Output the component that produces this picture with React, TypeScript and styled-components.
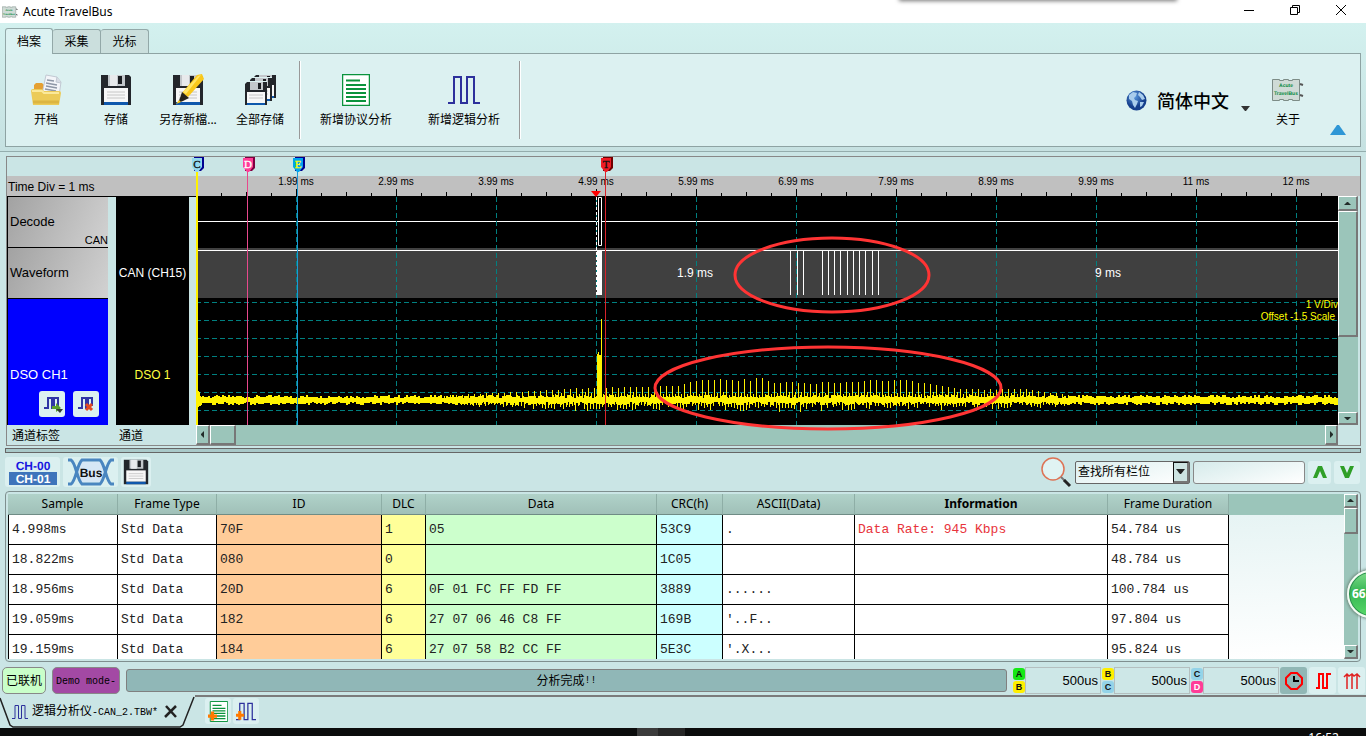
import React from 'react';
import styled, { createGlobalStyle } from 'styled-components';

const ui = `"Noto Sans", "Noto Sans CJK SC", sans-serif`;
const sans = `"Liberation Sans", "Noto Sans CJK SC", sans-serif`;
const mono = `"Liberation Mono", "Noto Sans CJK SC", monospace`;

const GlobalStyle = createGlobalStyle`
  * { box-sizing: border-box; }
  html, body { margin: 0; padding: 0; overflow: hidden; }
  button, input, select { margin: 0; font: inherit; color: inherit; }
  svg { display: block; }
`;

const Window = styled.div`
  position: relative;
  display: flex;
  flex-direction: column;
  height: 100vh;
  min-height: 640px;
  overflow: hidden;
  background: #cae5e5;
  color: #000;
  font: 12px/16px ${ui};
`;

/* Title bar */
const TitleBar = styled.header`
  display: flex;
  align-items: center;
  flex: none;
  height: 23px;
  padding: 0 2px;
  background: #fff;
`;
const Title = styled.h1`
  flex: 1;
  margin: 0 0 0 5px;
  font: 12px/16px ${ui};
`;
const WindowButton = styled.button`
  display: flex;
  align-items: center;
  justify-content: center;
  align-self: flex-start;
  width: 46px;
  height: 20px;
  padding: 0;
  border: 0;
  background: none;
`;
const TopShade = styled.div`
  position: absolute;
  top: -6px;
  left: 900px;
  width: 276px;
  height: 6px;
  box-shadow: 0 0 4px 1px #777;
`;

/* Ribbon */
const Ribbon = styled.section`
  flex: none;
  height: 129px;
  padding: 4px 5px 0;
  border-bottom: 1px solid #94adad;
  background: linear-gradient(#d3f1ef, #c6e1e1);
`;
const TabList = styled.div`
  display: flex;
  align-items: flex-end;
  height: 26px;
`;
const RibbonTab = styled.button<{ $active?: boolean }>`
  position: relative;
  z-index: ${p => (p.$active ? 1 : 0)};
  width: 48px;
  height: ${p => (p.$active ? 26 : 24)}px;
  margin-bottom: ${p => (p.$active ? -1 : 0)}px;
  padding: 0;
  border: 1px solid #93a8a8;
  border-left-width: ${p => (p.$active ? 1 : 0)}px;
  border-bottom: 0;
  border-radius: 3px 3px 0 0;
  background: ${p => (p.$active ? '#dcf2f2' : '#cbdfdd')};
`;
const RibbonPanel = styled.div`
  display: flex;
  height: 94px;
  padding: 7px 6px;
  border: 1px solid #8ea3a3;
  background: #dcf1f1;
`;
const RibbonGroup = styled.div`
  display: flex;
  padding-right: 3px;
  border-right: 1px solid #999;
  box-shadow: 1px 0 #fff;
`;
const RibbonButton = styled.button<{ $width: number }>`
  display: flex;
  flex-direction: column;
  align-items: center;
  gap: 6px;
  width: ${p => p.$width}px;
  padding: 13px 0 0;
  border: 0;
  background: none;
  white-space: nowrap;
`;
const RibbonRight = styled.div`
  display: flex;
  margin-left: auto;
`;
const LanguageButton = styled.button`
  display: flex;
  align-items: center;
  gap: 10px;
  padding: 0;
  border: 0;
  background: none;
  font: 500 18px/26px "Noto Sans CJK SC", sans-serif;
`;
const LanguageArrow = styled.svg`
  margin: 16px 0 0 2px;
`;
const AboutWrap = styled.div`
  margin: 0 6px 0 2px;
`;
const CollapseButton = styled.button`
  align-self: flex-end;
  margin: 0 8px 4px 0;
  padding: 0;
  border: 0;
  background: none;
`;

/* Scope */
const Scope = styled.section`
  flex: none;
  margin: 4px 5px 0 6px;
  border: 1px solid #888;
`;
const ScopeBody = styled.div`
  display: flex;
  height: 268px;
`;
const SideColumn = styled.div<{ $width: number }>`
  display: flex;
  flex-direction: column;
  flex: none;
  width: ${p => p.$width}px;
`;
const RulerCell = styled.div`
  flex: none;
  height: 20px;
  margin-top: 19px;
  padding-left: 1px;
  background: #c0c0c0;
  font: 12px/22px ${sans};
`;
const ChannelArea = styled.div`
  display: flex;
  flex: 1;
  gap: 8px;
  padding-right: 7px;
  border-top: 1px solid #000;
  border-left: 1px solid #000;
`;
const LabelColumn = styled.div`
  display: flex;
  flex-direction: column;
  width: 100px;
`;
const ChannelLabel = styled.div`
  position: relative;
  display: flex;
  align-items: center;
  height: 51px;
  padding-left: 2px;
  border-bottom: 1px solid #000;
  background: linear-gradient(115deg, #a2a2a2, #d2d2d2);
  font: 13px/16px ${sans};
`;
const ProtocolName = styled.small`
  position: absolute;
  right: 0;
  bottom: 0;
  font: 11px/14px ${sans};
`;
const DsoLabel = styled.div`
  display: flex;
  flex: 1;
  flex-direction: column;
  justify-content: flex-end;
  gap: 8px;
  padding: 0 9px 8px 2px;
  background: #0000ff;
  color: #fff;
  font: 13px/16px ${sans};
`;
const DsoTools = styled.div`
  display: flex;
  justify-content: flex-end;
  gap: 8px;
`;
const DsoButton = styled.button`
  width: 26px;
  height: 26px;
  padding: 0;
  border: 0;
  border-radius: 3px;
  background: #dcf1f1;
`;
const SourceColumn = styled.div`
  display: flex;
  flex-direction: column;
  flex: 1;
  background: #000;
  color: #fff;
  font: 12px/16px ${sans};
  white-space: nowrap;
`;
const SourceName = styled.div<{ $dso?: boolean }>`
  display: flex;
  align-items: center;
  justify-content: center;
  height: ${p => (p.$dso ? 52 : 152)}px;
  color: ${p => (p.$dso ? '#ffff40' : '#fff')};
`;
const Chart = styled.svg`
  position: relative;
  z-index: 1;
  flex: 1;
  min-width: 0;
  height: 268px;
  overflow: visible;
  pointer-events: none;
`;
const ScopeFooter = styled.div`
  display: flex;
  height: 20px;
  padding-right: 22px;
  line-height: 22px;
`;
const FooterLabel = styled.div<{ $width: number }>`
  flex: none;
  width: ${p => p.$width}px;
  padding-left: 5px;
`;

/* Scroll bars */
const Track = styled.div<{ $vertical?: boolean; $inset?: boolean }>`
  display: flex;
  flex: 1;
  flex-direction: ${p => (p.$vertical ? 'column' : 'row')};
  margin-right: ${p => (p.$inset ? 2 : 0)}px;
  background: #9bc5ba;
`;
const ScrollPart = styled.button<{ $size: number }>`
  display: flex;
  align-items: center;
  justify-content: center;
  flex: 0 0 ${p => p.$size}px;
  padding: 0;
  border: 1px solid #fff;
  border-right: 2px solid #777;
  border-bottom: 2px solid #777;
  background: #9bc5ba;
`;
const ScrollGap = styled.div`
  flex: 1;
`;

const Splitter = styled.div`
  flex: none;
  height: 5px;
  margin: 2px 5px 0;
  border: 1px solid #666;
  background: #a9c9c9;
`;

/* Toolbar */
const Toolbar = styled.div`
  display: flex;
  align-items: center;
  flex: none;
  height: 38px;
  padding: 0 6px 0 5px;
`;
const ToolButton = styled.button<{ $width: number; $height?: number; $active?: boolean }>`
  display: flex;
  align-items: center;
  justify-content: center;
  flex: none;
  width: ${p => p.$width}px;
  height: ${p => p.$height ?? 30}px;
  padding: 0;
  border: 0;
  border-radius: 3px;
  background: ${p => (p.$active ? '#91b7b5' : '#dbf0f0')};
`;
const ToolGroup = styled.div`
  display: flex;
  gap: 3px;
`;
const SearchGroup = styled.form`
  display: flex;
  align-items: center;
  gap: 3px;
  margin-left: auto;
`;
const SelectWrap = styled.label`
  position: relative;
  display: block;
`;
const ColumnSelect = styled.select`
  appearance: none;
  display: block;
  width: 115px;
  height: 23px;
  padding: 0 20px 0 2px;
  border: 1px solid #666;
  border-radius: 2px;
  background: linear-gradient(165deg, #dcefef, #fff);
`;
const SelectArrow = styled.span`
  position: absolute;
  top: 1px;
  right: 1px;
  display: flex;
  align-items: center;
  justify-content: center;
  width: 16px;
  height: 21px;
  border: 1px solid #111;
  border-right: 2px solid #777;
  border-bottom: 2px solid #777;
  background: #cde4e2;
  pointer-events: none;
`;
const SearchInput = styled.input`
  width: 112px;
  height: 23px;
  padding: 0 4px;
  border: 1px solid #888;
  border-radius: 3px;
  background: linear-gradient(165deg, #d6ebeb, #fff);
`;

/* Data table */
const TablePanel = styled.section`
  display: flex;
  flex: 1;
  min-height: 0;
  margin: 0 5px;
  padding: 2px;
  border: 1px solid #7f8f8f;
  border-radius: 4px;
`;
const TableArea = styled.div`
  flex: 1;
  min-width: 0;
  overflow: hidden;
  background: linear-gradient(#9bc5ba, #9bc5ba) 0 0 / 100% 21px no-repeat, linear-gradient(178deg, #dcefef, #fff);
`;
const DataTable = styled.table`
  width: 1221px;
  table-layout: fixed;
  border-spacing: 0;
`;
const HeadCell = styled.th<{ $width: number; $bold?: boolean }>`
  width: ${p => p.$width}px;
  height: 21px;
  padding: 0;
  border-right: 1px solid #8eaea6;
  border-bottom: 1px solid #6f8c85;
  background: linear-gradient(#b0d2c9, #a0c0b8);
  font: ${p => (p.$bold ? 700 : 400)} 12px/20px ${ui};
`;
const Cell = styled.td<{ $tint?: string; $ink?: string }>`
  height: 30px;
  padding: 0 3px;
  border-right: 1px solid #000;
  border-bottom: 1px solid #000;
  background: ${p => p.$tint ?? '#fff'};
  color: ${p => p.$ink ?? '#222'};
  font: 13px/16px ${mono};
  white-space: pre;
  &:first-child { border-left: 1px solid #000; }
`;
const TableScroll = styled.div`
  display: flex;
  flex: none;
  width: 14px;
`;

/* Status bar */
const StatusBar = styled.footer`
  display: flex;
  align-items: center;
  flex: none;
  height: 33px;
  padding: 4px 1px 0 2px;
`;
const StatusButton = styled.button<{ $width: number; $tone: string }>`
  flex: none;
  width: ${p => p.$width}px;
  height: 27px;
  margin-right: 6px;
  padding: 0;
  border: 1px solid #888;
  border-radius: 5px;
  background: ${p => p.$tone};
  white-space: nowrap;
`;
const Progress = styled.div`
  display: flex;
  align-items: center;
  justify-content: center;
  flex: 1;
  height: 23px;
  margin-right: 6px;
  border: 1px solid #808080;
  border-radius: 3px;
  background: #90b7b7;
`;
const Latin = styled.span`
  font: 10px/16px ${mono};
`;
const Delta = styled.label`
  display: flex;
  flex: none;
  width: 89px;
`;
const BadgePair = styled.span`
  display: flex;
  flex-direction: column;
  gap: 1px;
  width: 12px;
  padding-top: 1px;
`;
const Badge = styled.span<{ $tone: string; $ink?: string }>`
  height: 12px;
  border-radius: 3px;
  background: ${p => p.$tone};
  color: ${p => p.$ink ?? '#111'};
  font: 700 9px/12px ${sans};
  text-align: center;
`;
const DeltaInput = styled.input`
  width: 76px;
  height: 27px;
  padding: 0 2px;
  border: 1px solid #b4bfbf;
  background: #cde7e7;
  font: 13px/16px ${sans};
  text-align: right;
`;
const StatusTools = styled.div`
  display: flex;
  gap: 2px;
`;

/* Document tabs */
const DocumentBar = styled.nav`
  display: flex;
  flex: none;
  height: 33px;
`;
const DocumentTab = styled.div`
  position: relative;
  display: flex;
  align-items: center;
  gap: 4px;
  width: 195px;
  padding: 0 18px 0 12px;
  white-space: nowrap;
`;
const TabOutline = styled.svg`
  position: absolute;
  inset: 0;
`;
const CloseButton = styled.button`
  margin-left: auto;
  padding: 0;
  border: 0;
  background: none;
`;
const DocumentTools = styled.div`
  display: flex;
  flex: 1;
  gap: 2px;
  padding: 1px 10px;
  border-top: 2px solid #7b7b7b;
`;
const DesktopStrip = styled.div`
  display: flex;
  justify-content: space-between;
  flex: none;
  height: 8px;
  padding: 0 27px 0 637px;
  overflow: hidden;
  background: #0b0c0c;
  color: #fff;
  font: 12px/16px ${ui};
`;
const StripItem = styled.span`
  width: 48px;
  background: linear-gradient(90deg, #3b3b3b 44%, #262626 44%);
`;
const Clock = styled.time`
  padding-top: 2px;
`;
const FloatBall = styled.div`
  position: absolute;
  right: -29px;
  top: 570px;
  width: 48px;
  height: 48px;
  padding-left: 3px;
  border: 2px solid #f4fbf4;
  border-radius: 50%;
  background: linear-gradient(#7fdc8a, #35b653 45%, #58d868);
  box-shadow: 0 0 3px 1px #6d8579, inset 0 0 0 1px #2b8c50;
  color: #fff;
  font: 700 12px/44px ${ui};
`;

/* Icons */
const ChipLogo = ({ w, h }: { w: number; h: number }) => (
  <svg width={w} height={h} viewBox="0 0 32 22">
    <path d="M.5.5h7v1h4v-1h5v1h4v-1h7v21h-7v-1h-4v1h-5v-1h-4v1h-7z" fill="#cfdbd6" stroke="#7d8c87" />
    <path d="M28 5l3 1M28 16l3 1" stroke="#555" strokeWidth="2" />
    <g textAnchor="middle" textRendering="geometricPrecision" fontFamily="Liberation Sans" fontWeight="700" fontSize="5" fill="#078a3d">
      <text x="14" y="8">Acute</text>
      <text x="14" y="16">TravelBus</text>
    </g>
  </svg>
);

const FloppyShape = () => (
  <>
    <path d="M1 1h28l2 2v28H1z" fill="#23262b" />
    <path d="M8 1h17v11H8z" fill="#c3c7cb" />
    <path d="M10 1h7v11h-7z" fill="#e8eaec" />
    <path d="M18 2h4v8h-4z" fill="#1c1e22" />
    <path d="M4 14h24v14H4z" fill="#f7f7f7" />
    <path d="M7 18h18M7 21h18M7 24h18" stroke="#c6c6c6" />
    <path d="M4 28h24v3H4z" fill="#0f58ad" />
  </>
);
const Floppy = ({ size = 32 }: { size?: number }) => (
  <svg width={size} height={size} viewBox="0 0 32 32"><FloppyShape /></svg>
);
const FloppyPen = () => (
  <svg width="32" height="32" viewBox="0 0 32 32">
    <FloppyShape />
    <path d="M25 1l5-1 2 5-16 18-6-4z" fill="#f9c81c" />
    <path d="M26 2l3-1L14 20l-3-2z" fill="#ffe566" />
    <path d="M10 18l7 6-6 3-5 2 2-5z" fill="#26231c" />
    <path d="M7 26l-3 4 5-2z" fill="#f9c81c" />
  </svg>
);
const FloppyStack = () => (
  <svg width="32" height="32" viewBox="0 0 32 32">
    {[[9, 0], [5, 3], [0, 7]].map(([x, y]) => (
      <g key={x} transform={`translate(${x} ${y})`}>
        <path d="M0 2l2-2h21v25H0z" fill="#dcf1f1" />
        <path d="M1 3l2-2h20v23H1z" fill="#23262b" />
        <path d="M6 1h13v8H6z" fill="#c3c7cb" />
        <path d="M14 2h3v6h-3z" fill="#1c1e22" />
        <path d="M3 11h18v11H3z" fill="#f7f7f7" />
        <path d="M5 14h14M5 17h14" stroke="#c6c6c6" />
        <path d="M3 22h18v2H3z" fill="#0f58ad" />
      </g>
    ))}
  </svg>
);
const Folder = () => (
  <svg width="32" height="32" viewBox="0 0 32 32">
    <path d="M4 11l2-2h6l3 3v8H4z" fill="#e5a032" />
    <path d="M16 1l11 2 4 5-3 21-17-4z" fill="#f3f5f9" stroke="#c2c9d3" />
    <path d="M27 3l-1 5 5 1" fill="#d7dce5" stroke="#c2c9d3" />
    <path d="M17 6l7 1M16 9l11 2M16 12l11 2M15 15l11 2" stroke="#8e97a6" strokeWidth="1.5" />
    <path d="M1 17q0-2 2-2h9l2 2h15q2 0 2 2l-2 12H3z" fill="#eccb58" />
    <path d="M2 17h10l2 2h15" fill="none" stroke="#fbe99a" strokeWidth="2" />
    <path d="M3 28h26" stroke="#d2a832" strokeWidth="3" opacity=".6" />
  </svg>
);
const DocIcon = ({ w = 28, h = 32, plus }: { w?: number; h?: number; plus?: boolean }) => (
  <svg width={w} height={h} viewBox={plus ? '-3 0 31 32' : '0 0 28 32'}>
    <path d="M.5.5h27v31H.5z" fill="#fff" stroke="#0a933d" strokeWidth="1.5" />
    <path d="M4 6.500h14M4 11h20M4 15h20M4 19h20M4 23h20M4 27h20" stroke="#0a933d" strokeWidth="2" />
    {plus && <path d="M4 16v14M-3 23h14" stroke="#ff7a00" strokeWidth="5" />}
  </svg>
);
const PulseIcon = ({ w = 32, h = 28, plus }: { w?: number; h?: number; plus?: boolean }) => (
  <svg width={w} height={h} viewBox="0 0 32 28">
    <path d="M0 27h6V1h7v26h6V1h7v26h6" fill="none" stroke="#2d309c" strokeWidth="2" />
    {plus && <path d="M6 13v14M-1 20h14" stroke="#ff7a00" strokeWidth="5" />}
  </svg>
);
const Globe = () => (
  <svg width="21" height="21" viewBox="0 0 21 21">
    <defs>
      <radialGradient id="sea" cx=".4" cy=".3">
        <stop offset="0" stopColor="#5c9be0" />
        <stop offset="1" stopColor="#153f8c" />
      </radialGradient>
    </defs>
    <circle cx="10.5" cy="10.5" r="10" fill="url(#sea)" />
    <path d="M3 5l4-3 4 1-1 3-2 2 1 2 3 1-1 3-2 4-2-3-1-4-3-2zM13 2l4 3 2 4-3 1-2-3-2-2zM14 12l4 0-2 4-2 1z" fill="#a9cdec" />
  </svg>
);
const Arrow = ({ dir }: { dir: 'up' | 'down' | 'left' | 'right' }) => {
  const d = { up: 'M0 5h7L4 2H3z', down: 'M0 2h7L4 5H3z', left: 'M5 0v7L2 4V3z', right: 'M2 0v7l3-3V3z' }[dir];
  return <svg width="7" height="7" viewBox="0 0 7 7"><path d={d} fill="#222c29" /></svg>;
};
const DsoIcon = ({ remove }: { remove?: boolean }) => (
  <svg width="26" height="26" viewBox="0 0 26 26">
    <path d="M5 17h4V7h4v10h2V7h4v8" fill="none" stroke="#3036a6" strokeWidth="2" />
    {remove
      ? <path d="M13 13l6 6M19 13l-6 6" stroke="#e24a22" strokeWidth="3" />
      : <><path d="M13 15h4v-3l5 5-5 4v-3h-4z" fill="#58a12c" /><path d="M17 18h7l-3 4z" fill="#333c33" /></>}
  </svg>
);
const ChannelIcon = () => (
  <svg width="48" height="26" viewBox="0 0 48 26">
    <rect y="13" width="48" height="13" fill="#3e74bb" />
    <g textAnchor="middle" textRendering="geometricPrecision" fontFamily="Liberation Sans" fontWeight="700" fontSize="12">
      <text x="24" y="11" fill="#1717e0">CH-00</text>
      <text x="24" y="24" fill="#fff">CH-01</text>
    </g>
  </svg>
);
const BusIcon = () => (
  <svg width="48" height="28" viewBox="0 0 48 28">
    <path d="M13 4h22l5 10-5 10H13L8 14z" fill="#d6e7f5" />
    <path d="M1 2h3c5 3 6 20 11 24h18c5-4 6-21 11-24h3M1 26h3C9 23 10 6 15 2h18c5 4 6 21 11 24h3" fill="none" stroke="#4a86c0" strokeWidth="3" />
    <text x="24" y="19" textAnchor="middle" textRendering="geometricPrecision" fontFamily="Liberation Sans" fontWeight="700" fontSize="12" fill="#111">Bus</text>
  </svg>
);
const Magnifier = () => (
  <svg width="32" height="32" viewBox="0 0 32 32">
    <circle cx="13" cy="13" r="11" fill="#e0f3f3" stroke="#dd7355" strokeWidth="1.5" />
    <path d="M21 21l4 4" stroke="#777" strokeWidth="2" />
    <path d="M24 24l6 6" stroke="#222" strokeWidth="3" />
  </svg>
);
const Chevron = ({ down }: { down?: boolean }) => (
  <svg width="14" height="12" viewBox="0 0 14 12">
    <path d={down ? 'M0 0h4l3 7 3-7h4L9 12H5z' : 'M0 12h4l3-7 3 7h4L9 0H5z'} fill="#2f9f27" />
  </svg>
);

/* Chart geometry: x runs from the left edge of the plot, one division is 100 units */
const PLOT_SPAN = 2600;
const tickLabels = ['1.99 ms', '2.99 ms', '3.99 ms', '4.99 ms', '5.99 ms', '6.99 ms', '7.99 ms', '8.99 ms', '9.99 ms', '11 ms', '12 ms'];
const gridRows = [145, 163, 181, 199, 217, 235, 253];
const edges = [594, 601, 607, 626, 632, 638, 644, 651, 657, 663, 669, 676, 682];

const noise = (n: number) => {
  const v = Math.sin(n * 12.9898) * 43758.5453;
  return v - Math.floor(v);
};
const envelope: [number, number][] = [
  [0, 0], [240, 0], [300, 3], [390, 8], [480, 10], [500, 15], [515, 17], [565, 17],
  [580, 14], [620, 13], [690, 16], [710, 16], [745, 10], [770, 7], [830, 7], [880, 0], [PLOT_SPAN, 0],
];
const spikeHeight = (x: number) => {
  const i = envelope.findIndex(([px]) => px > x);
  if (i < 1) return 0;
  const [x0, y0] = envelope[i - 1];
  const [x1, y1] = envelope[i];
  return y0 + ((y1 - y0) * (x - x0)) / (x1 - x0);
};
const ripple = Array.from({ length: PLOT_SPAN }, (_, x) => {
  const h = spikeHeight(x);
  const edge = x < 6 ? 6 - x : 0;
  let top = 241 - Math.round(noise(x >> 1) * 3) - edge;
  let bottom = 245 + Math.round(noise((x >> 1) + 900) * 3) + edge;
  if (h > 0 && x % 6 === 2) top = 239 - Math.round(h * (0.9 + noise(x) * 0.15));
  if (h > 0 && x % 3 === 1) bottom += Math.round(noise(x + 50) * Math.min(h, 7));
  if (h > 6 && x % 6 === 5) top -= 3;
  return `M${x + 0.5} ${top}V${bottom}`;
}).join('');
const ticks = Array.from({ length: PLOT_SPAN / 25 }, (_, i) => {
  const size = (i + 1) % 4 === 0 ? 7 : (i + 1) % 2 === 0 ? 4 : 3;
  return `M${(i + 1) * 25 + 0.5} ${39 - size}v${size}`;
}).join('');
const gridLines = Array.from({ length: PLOT_SPAN / 100 }, (_, i) => `M${(i + 1) * 100 + 0.5} 40V268`).join('');

const Marker = ({ x, name, fill, shade, ink, line, width = 1 }: {
  x: number; name: string; fill: string; shade: string; ink: string; line: string; width?: number;
}) => (
  <g>
    <path d={`M${x + width / 2} 14V268`} stroke={line} strokeWidth={width} />
    <path d={`M${x - 2} 0h10v11l-3 3h-7z`} fill={shade} />
    <path d={`M${x - 4} 1h10v9l-4 5h-2l-4-5z`} fill={fill} />
    <text x={x + 1} y="11" textAnchor="middle" fontFamily="Liberation Serif" fontSize="11" fill={ink} stroke={ink} strokeWidth=".3">{name}</text>
  </g>
);

const ScopeChart = () => (
  <Chart role="img" aria-label="CAN">
    <svg width="100%" height="268">
      <rect y="19" width="100%" height="20" fill="#c0c0c0" />
      <path d={ticks} stroke="#000" />
      <g fontFamily="Liberation Sans" fontSize="10">
        {tickLabels.map((t, i) => <text key={t} x={(i + 1) * 100} y="28" textAnchor="middle">{t}</text>)}
      </g>
      <rect y="39" width="100%" height="229" fill="#000" />
      <rect y="91" width="100%" height="50" fill="#404040" />
      <path d={`M0 64.5H${PLOT_SPAN}M0 93.5H${PLOT_SPAN}`} stroke="#fff" />
      <path d={gridRows.map(y => `M0 ${y + 0.5}H${PLOT_SPAN}`).join('') + gridLines} stroke="#008080" strokeDasharray="5 3" />
      <path d={edges.map(x => `M${x + 0.5} 93V138`).join('')} stroke="#fff" />
      <path d="M401 94h5v44h-5z" fill="#fff" />
      <path d="M402.5 40.5h3v48h-3z" fill="#000" stroke="#fff" />
      <path d="M400.5 40V138" stroke="#fff" strokeDasharray="3 2" />
      <g fontFamily="Liberation Sans" fontSize="12" fill="#fff">
        <text x="481" y="120">1.9 ms</text>
        <text x="899" y="120">9 ms</text>
      </g>
      <path d={ripple} stroke="#fff200" />
      <path d="M401 197h1v-2h1v3h2v42h-4zM405 162h1v80h-1z" fill="#fff200" />
      <g fontFamily="Liberation Sans" fontSize="10" fill="#ffff00" textAnchor="end">
        <text x="100%" y="151">1 V/Div</text>
        <text x="100%" dx="-3" y="163">Offset -1.5 Scale</text>
      </g>
      <path d="M395 34h10l-5 6z" fill="#f00" />
    </svg>
    <Marker x={0} name="C" fill="#94d8ee" shade="#000090" ink="#111" line="#fff200" width={2} />
    <Marker x={51} name="D" fill="#ff3d97" shade="#7d0040" ink="#fff" line="#e8488c" />
    <Marker x={101} name="E" fill="#00a5ee" shade="#000090" ink="#ffff00" line="#1d9ad6" />
    <Marker x={409} name="T" fill="#ee1c25" shade="#700000" ink="#111" line="#d8232a" />
    <g fill="none" stroke="#ff3434" strokeWidth="3">
      <ellipse cx="636" cy="118" rx="97" ry="37" />
      <ellipse cx="632" cy="231" rx="173" ry="41" />
    </g>
  </Chart>
);

/* Table data */
const columns: [string, number][] = [
  ['Sample', 110], ['Frame Type', 99], ['ID', 165], ['DLC', 44], ['Data', 231],
  ['CRC(h)', 66], ['ASCII(Data)', 132], ['Information', 253], ['Frame Duration', 121],
];
const tints: Record<number, string> = { 2: '#ffcc99', 3: '#ffff99', 4: '#ccffcc', 5: '#ccffff' };
const rows = [
  ['4.998ms', 'Std Data', '70F', '1', '05', '53C9', '.', 'Data Rate: 945 Kbps', '54.784 us'],
  ['18.822ms', 'Std Data', '080', '0', '', '1C05', '', '', '48.784 us'],
  ['18.956ms', 'Std Data', '20D', '6', '0F 01 FC FF FD FF', '3889', '......', '', '100.784 us'],
  ['19.059ms', 'Std Data', '182', '6', '27 07 06 46 C8 FF', '169B', "'..F..", '', '97.804 us'],
  ['19.159ms', 'Std Data', '184', '6', '27 07 58 B2 CC FF', '5E3C', "'.X...", '', '95.824 us'],
];

const tones: Record<string, string> = { A: '#16e816', B: '#ffef00', C: '#94d3e8', D: '#ff3d97' };
const deltas = [['A', 'B'], ['B', 'C'], ['C', 'D']];

export default function App() {
  return (
    <Window>
      <GlobalStyle />
      <TitleBar>
        <ChipLogo w={16} h={12} />
        <Title>Acute TravelBus</Title>
        <WindowButton aria-label="Minimize">
          <svg width="10" height="10"><path d="M0 5.5h10" stroke="#000" /></svg>
        </WindowButton>
        <WindowButton aria-label="Restore">
          <svg width="10" height="10"><path d="M.5 2.5h7v7h-7zM2.500 2V.5h7v7H8" fill="none" stroke="#000" /></svg>
        </WindowButton>
        <WindowButton aria-label="Close">
          <svg width="10" height="10"><path d="M0 0l10 10M10 0L0 10" stroke="#000" /></svg>
        </WindowButton>
      </TitleBar>
      <TopShade />

      <Ribbon>
        <TabList role="tablist">
          <RibbonTab role="tab" aria-selected $active>档案</RibbonTab>
          <RibbonTab role="tab">采集</RibbonTab>
          <RibbonTab role="tab">光标</RibbonTab>
        </TabList>
        <RibbonPanel>
          <RibbonGroup>
            <RibbonButton $width={68}><Folder />开档</RibbonButton>
            <RibbonButton $width={72}><Floppy />存储</RibbonButton>
            <RibbonButton $width={72}><FloppyPen />另存新檔...</RibbonButton>
            <RibbonButton $width={72}><FloppyStack />全部存储</RibbonButton>
          </RibbonGroup>
          <RibbonGroup>
            <RibbonButton $width={112}><DocIcon />新增协议分析</RibbonButton>
            <RibbonButton $width={104}><PulseIcon h={32} />新增逻辑分析</RibbonButton>
          </RibbonGroup>
          <RibbonRight>
            <LanguageButton>
              <Globe />
              简体中文
              <LanguageArrow width="9" height="5"><path d="M0 0h9L5 5H4z" fill="#333" /></LanguageArrow>
            </LanguageButton>
            <AboutWrap>
              <RibbonButton $width={72}><ChipLogo w={32} h={32} />关于</RibbonButton>
            </AboutWrap>
            <CollapseButton aria-label="Collapse">
              <svg width="16" height="10"><path d="M0 10L7 0h2l7 10z" fill="#2f97d6" /></svg>
            </CollapseButton>
          </RibbonRight>
        </RibbonPanel>
      </Ribbon>

      <Scope>
        <ScopeBody>
          <SideColumn $width={189}>
            <RulerCell>Time Div = 1 ms</RulerCell>
            <ChannelArea>
              <LabelColumn>
                <ChannelLabel>Decode<ProtocolName>CAN</ProtocolName></ChannelLabel>
                <ChannelLabel>Waveform</ChannelLabel>
                <DsoLabel>
                  DSO CH1
                  <DsoTools>
                    <DsoButton aria-label="Add"><DsoIcon /></DsoButton>
                    <DsoButton aria-label="Remove"><DsoIcon remove /></DsoButton>
                  </DsoTools>
                </DsoLabel>
              </LabelColumn>
              <SourceColumn>
                <SourceName>CAN (CH15)</SourceName>
                <SourceName $dso>DSO 1</SourceName>
              </SourceColumn>
            </ChannelArea>
          </SideColumn>
          <ScopeChart />
          <SideColumn $width={22}>
            <RulerCell />
            <Track $vertical $inset>
              <ScrollPart $size={15} aria-label="Scroll up"><Arrow dir="up" /></ScrollPart>
              <ScrollPart $size={126} aria-label="Vertical position" />
              <ScrollGap />
              <ScrollPart $size={13} aria-label="Scroll down"><Arrow dir="down" /></ScrollPart>
            </Track>
          </SideColumn>
        </ScopeBody>
        <ScopeFooter>
          <FooterLabel $width={107}>通道标签</FooterLabel>
          <FooterLabel $width={82}>通道</FooterLabel>
          <Track>
            <ScrollPart $size={14} aria-label="Scroll left"><Arrow dir="left" /></ScrollPart>
            <ScrollPart $size={26} aria-label="Horizontal position" />
            <ScrollGap />
            <ScrollPart $size={13} aria-label="Scroll right"><Arrow dir="right" /></ScrollPart>
          </Track>
        </ScopeFooter>
      </Scope>

      <Splitter />

      <Toolbar>
        <ToolGroup>
          <ToolButton $width={55} aria-label="Channels"><ChannelIcon /></ToolButton>
          <ToolButton $width={55} aria-label="Bus"><BusIcon /></ToolButton>
          <ToolButton $width={30} aria-label="Save"><Floppy size={26} /></ToolButton>
        </ToolGroup>
        <SearchGroup onSubmit={e => e.preventDefault()}>
          <Magnifier />
          <SelectWrap>
            <ColumnSelect aria-label="查找栏位"><option>查找所有栏位</option></ColumnSelect>
            <SelectArrow><svg width="9" height="5"><path d="M0 0h9L5 5H4z" fill="#222" /></svg></SelectArrow>
          </SelectWrap>
          <SearchInput aria-label="查找" />
          <ToolButton type="button" $width={23} $height={23} aria-label="Previous"><Chevron /></ToolButton>
          <ToolButton type="button" $width={26} $height={23} aria-label="Next"><Chevron down /></ToolButton>
        </SearchGroup>
      </Toolbar>

      <TablePanel>
        <TableArea>
          <DataTable>
            <thead>
              <tr>{columns.map(([name, width]) => <HeadCell key={name} $width={width} $bold={name === 'Information'}>{name}</HeadCell>)}</tr>
            </thead>
            <tbody>
              {rows.map(row => (
                <tr key={row[0]}>
                  {row.map((value, i) => <Cell key={columns[i][0]} $tint={tints[i]} $ink={i === 7 ? '#e8343c' : undefined}>{value}</Cell>)}
                </tr>
              ))}
            </tbody>
          </DataTable>
        </TableArea>
        <TableScroll>
          <Track $vertical>
            <ScrollPart $size={14} aria-label="Scroll up"><Arrow dir="up" /></ScrollPart>
            <ScrollPart $size={26} aria-label="Table position" />
            <ScrollGap />
            <ScrollPart $size={14} aria-label="Scroll down"><Arrow dir="down" /></ScrollPart>
          </Track>
        </TableScroll>
      </TablePanel>

      <StatusBar>
        <StatusButton $width={44} $tone="#c9ffc9">已联机</StatusButton>
        <StatusButton $width={68} $tone="#a349a4"><Latin>Demo mode-</Latin></StatusButton>
        <Progress>分析完成<Latin>!!</Latin></Progress>
        {deltas.map(([from, to]) => (
          <Delta key={from}>
            <BadgePair>
              <Badge $tone={tones[from]}>{from}</Badge>
              <Badge $tone={tones[to]} $ink={to === 'D' ? '#fff' : undefined}>{to}</Badge>
            </BadgePair>
            <DeltaInput readOnly value="500us" />
          </Delta>
        ))}
        <StatusTools>
          <ToolButton $width={27} $height={27} $active aria-label="Time">
            <svg width="18" height="18"><path d="M6 1h6l5 5v6l-5 5H6l-5-5V6z" fill="none" stroke="#f00" strokeWidth="2" /><path d="M9 4v5h5" fill="none" stroke="#000" strokeWidth="2" /></svg>
          </ToolButton>
          <ToolButton $width={27} $height={27} aria-label="Pulse">
            <svg width="18" height="18"><path d="M2 16h3V2h4v14h4V2h4" fill="none" stroke="#f00" strokeWidth="2" /></svg>
          </ToolButton>
          <ToolButton $width={27} $height={27} aria-label="Edges">
            <svg width="18" height="18"><path d="M4 17V2M9 17V2M14 17V2M1 5l3-3 2 2 3-2 2 2 3-2 3 3" fill="none" stroke="#e02020" strokeWidth="1.5" /></svg>
          </ToolButton>
        </StatusTools>
      </StatusBar>

      <DocumentBar>
        <DocumentTab>
          <TabOutline width="195" height="33"><path d="M0 3L10 30l3 2h167l3-2L194 2" fill="none" stroke="#222" strokeWidth="1.5" /></TabOutline>
          <PulseIcon w={16} h={16} />
          <span>逻辑分析仪<Latin>-CAN_2.TBW*</Latin></span>
          <CloseButton aria-label="Close tab">
            <svg width="13" height="13"><path d="M2 1l10 11M12 1L1 12" stroke="#222" strokeWidth="2.5" /></svg>
          </CloseButton>
        </DocumentTab>
        <DocumentTools>
          <ToolButton $width={26} $height={26} aria-label="Add protocol"><DocIcon w={20} h={21} plus /></ToolButton>
          <ToolButton $width={26} $height={26} aria-label="Add logic"><PulseIcon w={20} h={21} plus /></ToolButton>
        </DocumentTools>
      </DocumentBar>

      <DesktopStrip>
        <StripItem />
        <Clock>16:52</Clock>
      </DesktopStrip>
      <FloatBall>66</FloatBall>
    </Window>
  );
}
